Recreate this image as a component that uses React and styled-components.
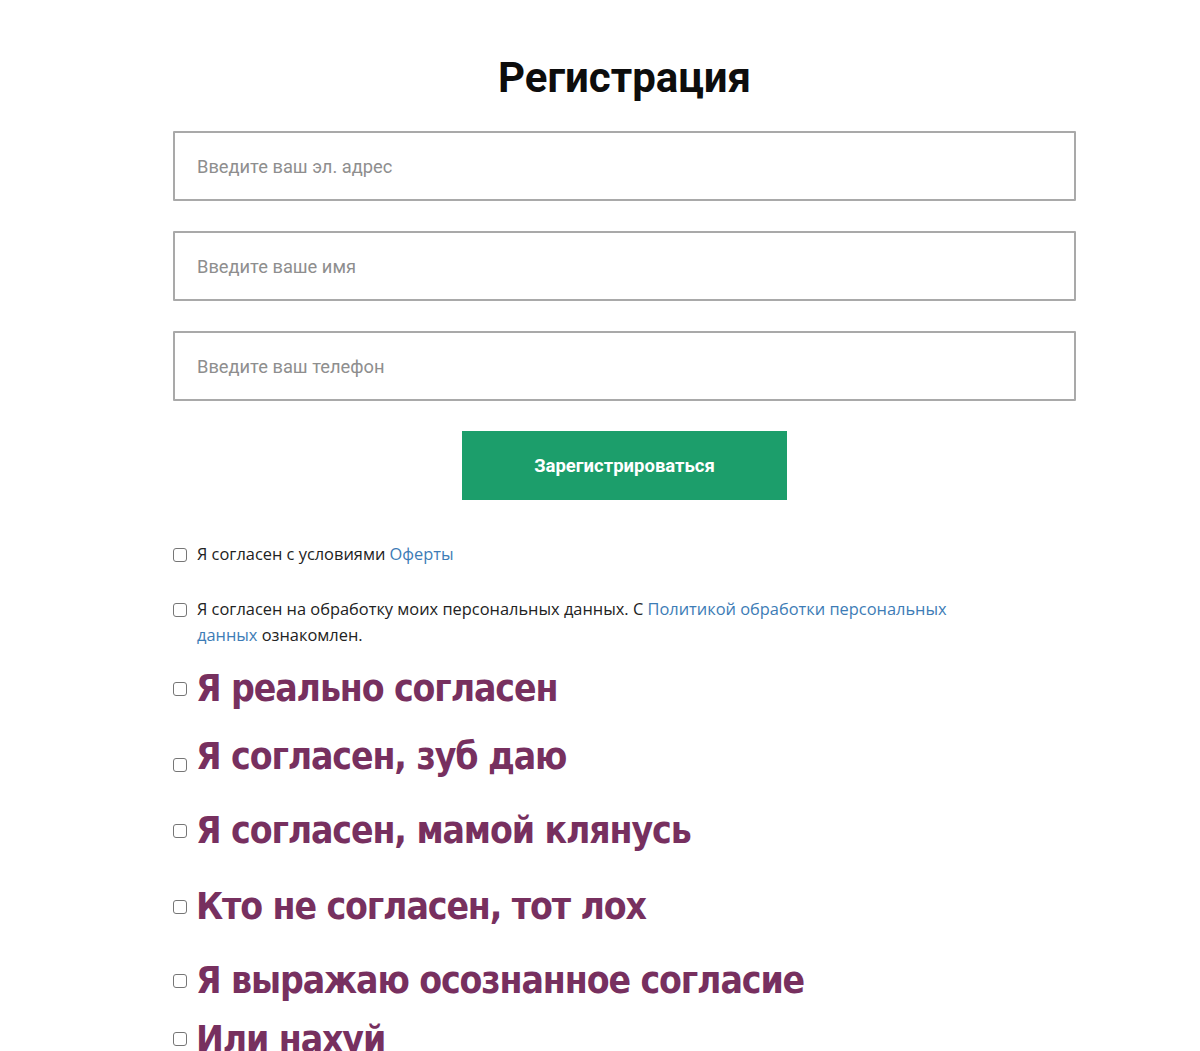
import React from 'react';
import styled, { createGlobalStyle } from 'styled-components';

const GlobalStyle = createGlobalStyle`
  body {
    margin: 0;
    background: #fff;
    font-family: Roboto, "Liberation Sans", sans-serif;
  }
`;

const Page = styled.div`
  height: 1051px;
  overflow: hidden;
`;

const Form = styled.div`
  width: 903px;
  margin-left: 173px;
  padding-top: 55px;
`;

const Title = styled.h1`
  margin: 0 0 30px;
  text-align: center;
  font-family: Roboto, "Liberation Sans", sans-serif;
  font-weight: 700;
  font-size: 42px;
  line-height: 46px;
  color: #0d0d0d;
`;

const Fields = styled.div`
  display: flex;
  flex-direction: column;
  gap: 30px;
`;

const Field = styled.input`
  height: 70px;
  box-sizing: border-box;
  border: 2px solid #a9a9a9;
  border-radius: 1px;
  padding: 0 22px;
  font-family: Roboto, "Liberation Sans", sans-serif;
  font-size: 18.3px;
  color: #333;
  outline: none;

  &::placeholder {
    color: #8e8e8e;
  }
`;

const ButtonRow = styled.div`
  display: flex;
  justify-content: center;
  margin-top: 30px;
`;

const Submit = styled.button`
  width: 325px;
  height: 69px;
  border: none;
  background: #1c9e6b;
  color: #fff;
  font-family: Roboto, "Liberation Sans", sans-serif;
  font-weight: 700;
  font-size: 18.5px;
  cursor: pointer;
`;

const Agreements = styled.div`
  display: flex;
  flex-direction: column;
  gap: 29px;
  margin-top: 41px;
  max-width: 800px;
`;

const Agree = styled.label`
  display: flex;
  align-items: flex-start;
  gap: 10px;
  font-family: "Open Sans", "Liberation Sans", sans-serif;
  font-size: 16.4px;
  line-height: 26px;
  color: #222;
`;

const Box = styled.span`
  flex: none;
  width: 12px;
  height: 12px;
  margin-top: ${(p) => p.$top || 7}px;
  border: 1px solid #767676;
  border-radius: 3px;
  background: #fff;
`;

const Link = styled.a`
  color: #3d7cb6;
  text-decoration: none;
`;

const BigList = styled.div`
  display: flex;
  flex-direction: column;
  margin-top: 19px;
`;

const BigItem = styled.div`
  display: flex;
  align-items: flex-start;
  gap: 9px;
  margin-top: ${(p) => p.$space}px;
  font-family: "Liberation Sans Narrow", "DejaVu Sans", sans-serif;
  font-stretch: condensed;
  font-weight: 700;
  font-size: 37px;
  letter-spacing: -1.1px;
  line-height: 44px;
  color: #77305f;
  white-space: nowrap;
`;

const bigItems = [
  { text: 'Я реально согласен', space: 0, box: 15 },
  { text: 'Я согласен, зуб даю', space: 24, box: 23 },
  { text: 'Я согласен, мамой клянусь', space: 30, box: 15 },
  { text: 'Кто не согласен, тот лох', space: 32, box: 15 },
  { text: 'Я выражаю осознанное согласие', space: 30, box: 15 },
  { text: 'Или нахуй', space: 15, box: 14 },
];

const App = () => (
  <Page>
    <GlobalStyle />
    <Form>
      <Title>Регистрация</Title>
      <Fields>
        <Field type="email" placeholder="Введите ваш эл. адрес" />
        <Field type="text" placeholder="Введите ваше имя" />
        <Field type="tel" placeholder="Введите ваш телефон" />
      </Fields>
      <ButtonRow>
        <Submit type="button">Зарегистрироваться</Submit>
      </ButtonRow>
      <Agreements>
        <Agree>
          <Box />
          <span>
            Я согласен с условиями <Link href="#">Оферты</Link>
          </span>
        </Agree>
        <Agree>
          <Box />
          <span>
            Я согласен на обработку моих персональных данных. С{' '}
            <Link href="#">Политикой обработки персональных данных</Link> ознакомлен.
          </span>
        </Agree>
      </Agreements>
      <BigList>
        {bigItems.map((item) => (
          <BigItem key={item.text} $space={item.space}>
            <Box $top={item.box} />
            <span>{item.text}</span>
          </BigItem>
        ))}
      </BigList>
    </Form>
  </Page>
);

export default App;
